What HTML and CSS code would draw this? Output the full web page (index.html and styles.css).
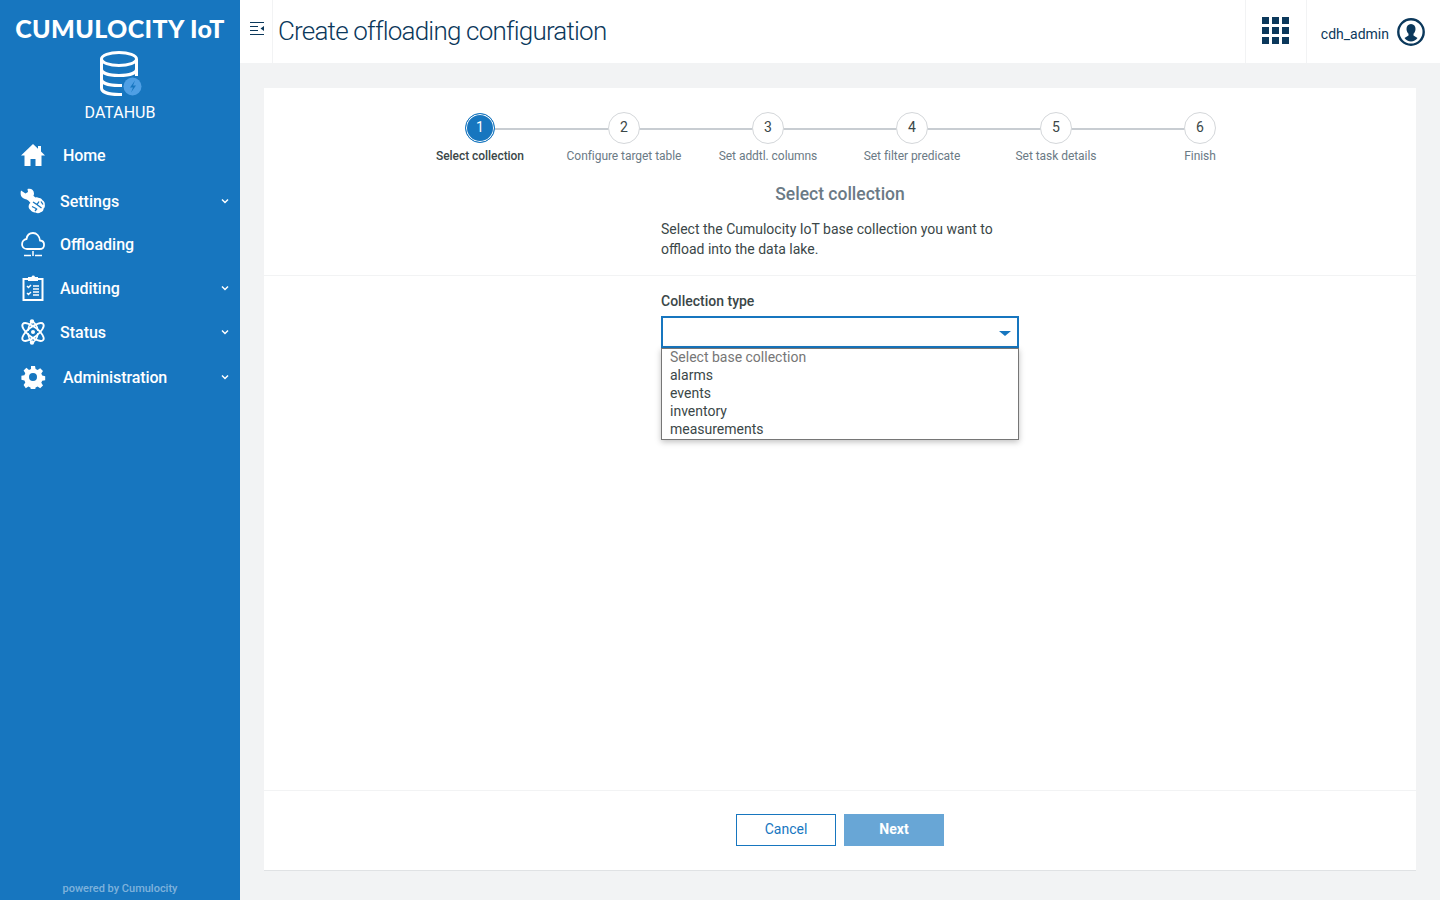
FILE: index.html
```html
<!DOCTYPE html>
<html>
  <head>
    <meta charset="UTF-8" />
    <title>Create offloading configuration</title>
    <link rel="stylesheet" href="styles.css">
  </head>
  <body>
    <aside class="sidebar">
      <div class="brand">CUMULOCITY IoT</div>
      <div class="app-logo">
        <svg width="44" height="48" viewBox="0 0 44 48">
          <g fill="none" stroke="#fff" stroke-width="3">
            <ellipse cx="20" cy="9" rx="17.500" ry="6.500" />
            <path d="M2.500 9v29c0 4 7 6.500 17.500 6.500h3" />
            <path d="M37.500 9v17" />
            <path d="M2.500 19c0 4 7 6.500 17.500 6.500s17.500-2.500 17.500-6.500" />
            <path d="M2.500 29c0 4 7 6.500 17.500 6.500h3" />
          </g>
          <circle cx="33.500" cy="36.500" r="9" fill="#4f9fe4" />
          <path d="M36 30.500l-5 7h3l-2 5 5-7h-3z" fill="#1776bf" />
        </svg>
        <div class="app-name">DATAHUB</div>
      </div>
      <nav class="nav">
        <a class="nav-item nav-item-home">
          <svg class="nav-icon" width="26" height="24" viewBox="0 0 26 24"><path fill="#fff" d="M13 1L1 12.500h3.500V23h6v-7h5v7h6V12.500H25l-4-3.900V3h-3v2.700z" /></svg>
          <span>Home</span>
        </a>
        <a class="nav-item nav-item-settings">
          <svg class="nav-icon" width="26" height="26" viewBox="0 0 26 26"><path fill="#fff" d="M1 2.500l4.500 3 2.500-1.500L7.500 1C11 0 14 2 14 5.500c0 1-.2 1.500-.6 2.300l2 1.700c1-.5 2.500-.3 3.600.5 1.500-.2 3 .8 3.500 2.300 1.500.8 2.500 2.500 2.300 4.200.4 1.800-.1 3.300-1.300 4.300.2 1.700-1 3.300-2.800 3.400-1.700 1.200-3.700 1.200-5.200.2-2 .2-4-.8-5-2.500-1.700-1-2.300-3-1.600-4.800.2-1 .8-1.800 1.600-2.200l-1.900-2.200C6 11 3.500 10.800 2 9.300.5 7.800.3 4.800 1 2.500z" /><path fill="none" stroke="#1776bf" stroke-width="1.300" d="M13 14l4 2.500 2-3M12 18.500l4 2M17.500 17l4 3M21 13.500l2 3M15 23l2-2.500" /></svg>
          <span>Settings</span>
          <svg class="chevron" width="8" height="6" viewBox="0 0 8 6"><path fill="none" stroke="#fff" stroke-width="1.500" d="M1 1.500l3 3 3-3" /></svg>
        </a>
        <a class="nav-item nav-item-offload">
          <svg class="nav-icon" width="26" height="26" viewBox="0 0 26 26"><path fill="none" stroke="#fff" stroke-width="1.800" d="M7 18h12.500c6 0 6-8 .5-8.500C19.500 5 16.500 2 13 2c-3.500 0-6 2.500-6.500 6C1 8.500 0 18 7 18z" /><path stroke="#fff" stroke-width="1.500" d="M4 24.500h7M15 24.500h7M13 20v5" /></svg>
          <span>Offloading</span>
        </a>
        <a class="nav-item">
          <svg class="nav-icon" width="26" height="26" viewBox="0 0 26 26"><path fill="none" stroke="#fff" stroke-width="2" d="M8 4H3.500v21h19V4H18" /><path fill="#fff" d="M8 2h3.500a1.800 1.800 0 0 1 3.500 0H18v4H8z" /><path fill="none" stroke="#fff" stroke-width="1.400" d="M7 11l1.500 1.500L11 10M7 18l1.500 1.500L11 17M13 11h6M13 14h6M13 17h6M13 20h6" /></svg>
          <span>Auditing</span>
          <svg class="chevron" width="8" height="6" viewBox="0 0 8 6"><path fill="none" stroke="#fff" stroke-width="1.500" d="M1 1.500l3 3 3-3" /></svg>
        </a>
        <a class="nav-item">
          <svg class="nav-icon" width="26" height="26" viewBox="0 0 26 26"><g fill="none" stroke="#fff" stroke-width="1.900"><ellipse cx="13" cy="13" rx="13" ry="5" transform="rotate(38 13 13)" /><ellipse cx="13" cy="13" rx="13" ry="5" transform="rotate(-38 13 13)" /></g><circle cx="12" cy="2.500" r="2.200" fill="#fff" /><circle cx="12" cy="23.500" r="2.200" fill="#fff" /><circle cx="13" cy="13" r="2" fill="#fff" /><path fill="none" stroke="#fff" stroke-width="1.500" d="M8 12c.5-5 2-8 4-9.500M8 14c.5 5 2 8 4 9.500M18 12c-.5-5-2-8-6-9.500M18 14c-.5 5-2 8-6 9.500" /></svg>
          <span>Status</span>
          <svg class="chevron" width="8" height="6" viewBox="0 0 8 6"><path fill="none" stroke="#fff" stroke-width="1.500" d="M1 1.500l3 3 3-3" /></svg>
        </a>
        <a class="nav-item nav-item-home nav-item-admin">
          <svg class="nav-icon" width="26" height="24" viewBox="0 0 24 24"><path fill="#fff" fill-rule="evenodd" d="M10 1h4l.6 3 2 .9 2.600-1.700 2.800 2.800-1.700 2.600.9 2 3 .6v4l-3 .6-.9 2 1.700 2.600-2.800 2.800-2.600-1.700-2 .9-.6 3h-4l-.6-3-2-.9-2.600 1.700L2.600 20l1.700-2.600-.9-2-3-.6v-4l3-.6.9-2-1.700-2.600 2.800-2.800L8 5l2-.9zM12 8a4 4 0 1 0 0 8 4 4 0 0 0 0-8z" /></svg>
          <span>Administration</span>
          <svg class="chevron" width="8" height="6" viewBox="0 0 8 6"><path fill="none" stroke="#fff" stroke-width="1.500" d="M1 1.500l3 3 3-3" /></svg>
        </a>
      </nav>
      <div class="powered">powered by Cumulocity</div>
    </aside>

    <div class="main">
      <header class="topbar">
        <button class="menu-toggle">
          <svg width="14" height="13" viewBox="0 0 14 13"><path stroke="#0b385b" stroke-width="1" d="M0 .5h14M0 4.500h8M0 8.500h8M0 12.500h14" /><path fill="#0b385b" d="M14 4v5l-3.500-2.500z" /></svg>
        </button>
        <h1 class="page-title">Create offloading configuration</h1>
        <div class="app-switcher">
          <div class="app-grid">
            <i></i><i></i><i></i><i></i><i></i><i></i><i></i><i></i><i></i>
          </div>
        </div>
        <div class="user-menu">
          <span>cdh_admin</span>
          <svg width="28" height="28" viewBox="0 0 28 28"><circle cx="14" cy="14" r="12.700" fill="none" stroke="#0b385b" stroke-width="2.400" /><path fill="#0b385b" d="M14 6c-3 0-4.500 2.200-4.500 5 0 2 1 3.800 2 4.800v1.700L7.500 20c1.600 2.300 3.800 3.500 6.500 3.500s4.900-1.200 6.500-3.500l-4-2.500v-1.700c1-1 2-2.800 2-4.800 0-2.800-1.500-5-4.500-5z" /></svg>
        </div>
      </header>

      <div class="content">
        <section class="card">
          <div class="card-top">
            <ol class="stepper">
              <li class="step step-active"><span class="step-dot">1</span><span class="step-label">Select collection</span></li>
              <li class="step"><span class="step-dot">2</span><span class="step-label">Configure target table</span></li>
              <li class="step"><span class="step-dot">3</span><span class="step-label">Set addtl. columns</span></li>
              <li class="step"><span class="step-dot">4</span><span class="step-label">Set filter predicate</span></li>
              <li class="step"><span class="step-dot">5</span><span class="step-label">Set task details</span></li>
              <li class="step"><span class="step-dot">6</span><span class="step-label">Finish</span></li>
            </ol>
            <h2 class="step-title">Select collection</h2>
            <p class="step-text">Select the Cumulocity IoT base collection you want to offload into the data lake.</p>
          </div>
          <div class="card-body">
            <div class="form-group">
              <label class="form-label">Collection type</label>
              <div class="select-box">
                <span class="select-caret"></span>
                <ul class="select-list">
                  <li class="select-placeholder">Select base collection</li>
                  <li>alarms</li>
                  <li>events</li>
                  <li>inventory</li>
                  <li>measurements</li>
                </ul>
              </div>
            </div>
          </div>
          <div class="card-footer">
            <button class="btn btn-cancel">Cancel</button>
            <button class="btn btn-next">Next</button>
          </div>
        </section>
      </div>
    </div>
  </body>
</html>
```

FILE: styles.css
```css
* {
  box-sizing: border-box;
}
html,
body {
  height: 100%;
}
body {
  margin: 0;
  display: flex;
  height: 900px;
  overflow: hidden;
  background-color: #f2f3f4;
  font-family: Roboto, "Liberation Sans", sans-serif;
  font-size: 14px;
  color: #3b4748;
}

/* sidebar */
.sidebar {
  width: 240px;
  flex-shrink: 0;
  display: flex;
  flex-direction: column;
  background-color: #1776bf;
  color: #ffffff;
}
.brand {
  margin-top: 12px;
  height: 32px;
  line-height: 32px;
  text-align: center;
  font-family: Lato, sans-serif;
  font-weight: 900;
  font-size: 25px;
  letter-spacing: 0.35px;
  white-space: nowrap;
}
.app-logo {
  margin-top: 6px;
  display: flex;
  flex-direction: column;
  align-items: center;
}
.app-logo svg {
  margin-left: 1px;
}
.app-name {
  margin-top: 5px;
  font-size: 16px;
  line-height: 20px;
}
.nav {
  margin-top: 10px;
  display: flex;
  flex-direction: column;
}
.nav-item {
  height: 44px;
  display: flex;
  align-items: center;
  padding: 0 11px 0 20px;
  font-size: 16px;
  font-weight: 500;
}
.nav-item span {
  margin-left: 14px;
  flex: 1;
}
.nav-item-home {
  margin-bottom: 2px;
}
.nav-item-home span {
  margin-left: 17px;
  letter-spacing: -0.1px;
}
.nav-item-offload {
  margin-top: -1px;
}
.nav-item-admin {
  margin-top: 1px;
  margin-bottom: 0;
}
.nav-icon {
  flex-shrink: 0;
}
.powered {
  margin-top: auto;
  padding-bottom: 4px;
  text-align: center;
  font-size: 11px;
  font-weight: 500;
  line-height: 14px;
  color: rgba(255, 255, 255, 0.45);
}

/* top bar */
.main {
  flex: 1;
  display: flex;
  flex-direction: column;
  min-width: 0;
}
.topbar {
  height: 63px;
  display: flex;
  align-items: stretch;
  background-color: #ffffff;
}
.menu-toggle {
  width: 33px;
  padding: 0 0 4px 1px;
  border: 0;
  border-right: 1px solid #f2f3f4;
  background: none;
}
.page-title {
  flex: 1;
  margin: 0;
  padding-left: 5px;
  line-height: 62px;
  font-size: 26px;
  font-weight: 300;
  letter-spacing: -0.8px;
  color: #0b385b;
}
.app-switcher {
  width: 62px;
  display: flex;
  align-items: center;
  justify-content: center;
  padding: 0 1px 2px 0;
  border-left: 1px solid #f2f3f4;
  border-right: 1px solid #f2f3f4;
}
.app-grid {
  display: grid;
  grid-template-columns: repeat(3, 7px);
  grid-auto-rows: 7px;
  gap: 3px;
}
.app-grid i {
  background-color: #0b385b;
}
.user-menu {
  width: 133px;
  display: flex;
  align-items: center;
  justify-content: flex-end;
  gap: 8px;
  padding: 0 15px 0 0;
  color: #0b385b;
}
.user-menu span {
  padding-top: 4px;
}

/* card */
.content {
  flex: 1;
  padding: 25px 24px 29px;
  display: flex;
}
.card {
  flex: 1;
  display: flex;
  flex-direction: column;
  background-color: #ffffff;
  border-bottom: 1px solid #e0e2e4;
}
.card-top {
  height: 188px;
  padding-top: 24px;
  border-bottom: 1px solid #f2f3f4;
}

/* stepper */
.stepper {
  display: flex;
  justify-content: center;
  margin: 0;
  padding: 0;
  list-style: none;
}
.step {
  position: relative;
  width: 144px;
  display: flex;
  flex-direction: column;
  align-items: center;
}
.step::before {
  content: "";
  position: absolute;
  top: 16px;
  left: 50%;
  width: 144px;
  height: 2px;
  background-color: #c8cdd2;
}
.step:last-child::before {
  display: none;
}
.step-dot {
  position: relative;
  width: 32px;
  height: 32px;
  line-height: 29px;
  text-align: center;
  border: 1px solid #d4d7da;
  border-radius: 50%;
  background-color: #ffffff;
}
.step-label {
  margin-top: 5px;
  line-height: 14px;
  font-size: 12px;
  letter-spacing: -0.05px;
  color: #6b7a85;
  white-space: nowrap;
}
.step-active .step-dot {
  width: 30px;
  height: 30px;
  margin: 1px 0;
  line-height: 27px;
  color: #ffffff;
  background-color: #1776bf;
  border-color: #1776bf;
  box-shadow: inset 0 0 0 1px #ffffff;
}
.step-active .step-label {
  color: #3b4748;
  font-weight: 500;
}
.step-title {
  margin: 19px 0 0;
  line-height: 24px;
  text-align: center;
  font-size: 17.500px;
  font-weight: 500;
  color: #6b7a85;
}
.step-text {
  width: 358px;
  margin: 13px auto 0;
  line-height: 20px;
}

/* form */
.card-body {
  flex: 1;
  padding-top: 15px;
}
.form-group {
  width: 358px;
  margin: 0 auto;
}
.form-label {
  display: block;
  line-height: 20px;
  font-weight: 500;
}
.select-box {
  position: relative;
  height: 32px;
  margin-top: 5px;
  border: 2px solid #1776bf;
}
.select-caret {
  position: absolute;
  top: 13px;
  right: 6px;
  border-top: 5px solid #1776bf;
  border-left: 6.500px solid transparent;
  border-right: 6.500px solid transparent;
}
.select-list {
  position: absolute;
  top: 30px;
  left: -2px;
  right: -2px;
  margin: 0;
  padding: 0;
  list-style: none;
  background-color: #ffffff;
  border: 1px solid #767676;
  box-shadow: 0 2px 6px rgba(0, 0, 0, 0.25);
}
.select-list li {
  height: 18px;
  line-height: 16px;
  padding-left: 8px;
}
.select-placeholder {
  color: #767676;
}

/* footer */
.card-footer {
  height: 80px;
  display: flex;
  align-items: center;
  justify-content: center;
  gap: 8px;
  padding-bottom: 2px;
  border-top: 1px solid #f2f3f4;
}
.btn {
  width: 100px;
  height: 32px;
  padding-bottom: 2px;
  font-family: inherit;
  font-size: 14px;
  border: 1px solid #1776bf;
  border-radius: 0;
}
.btn-cancel {
  background-color: #ffffff;
  color: #1776bf;
}
.btn-next {
  background-color: #68a6d6;
  border-color: #68a6d6;
  color: #ffffff;
  font-weight: 700;
}
```
